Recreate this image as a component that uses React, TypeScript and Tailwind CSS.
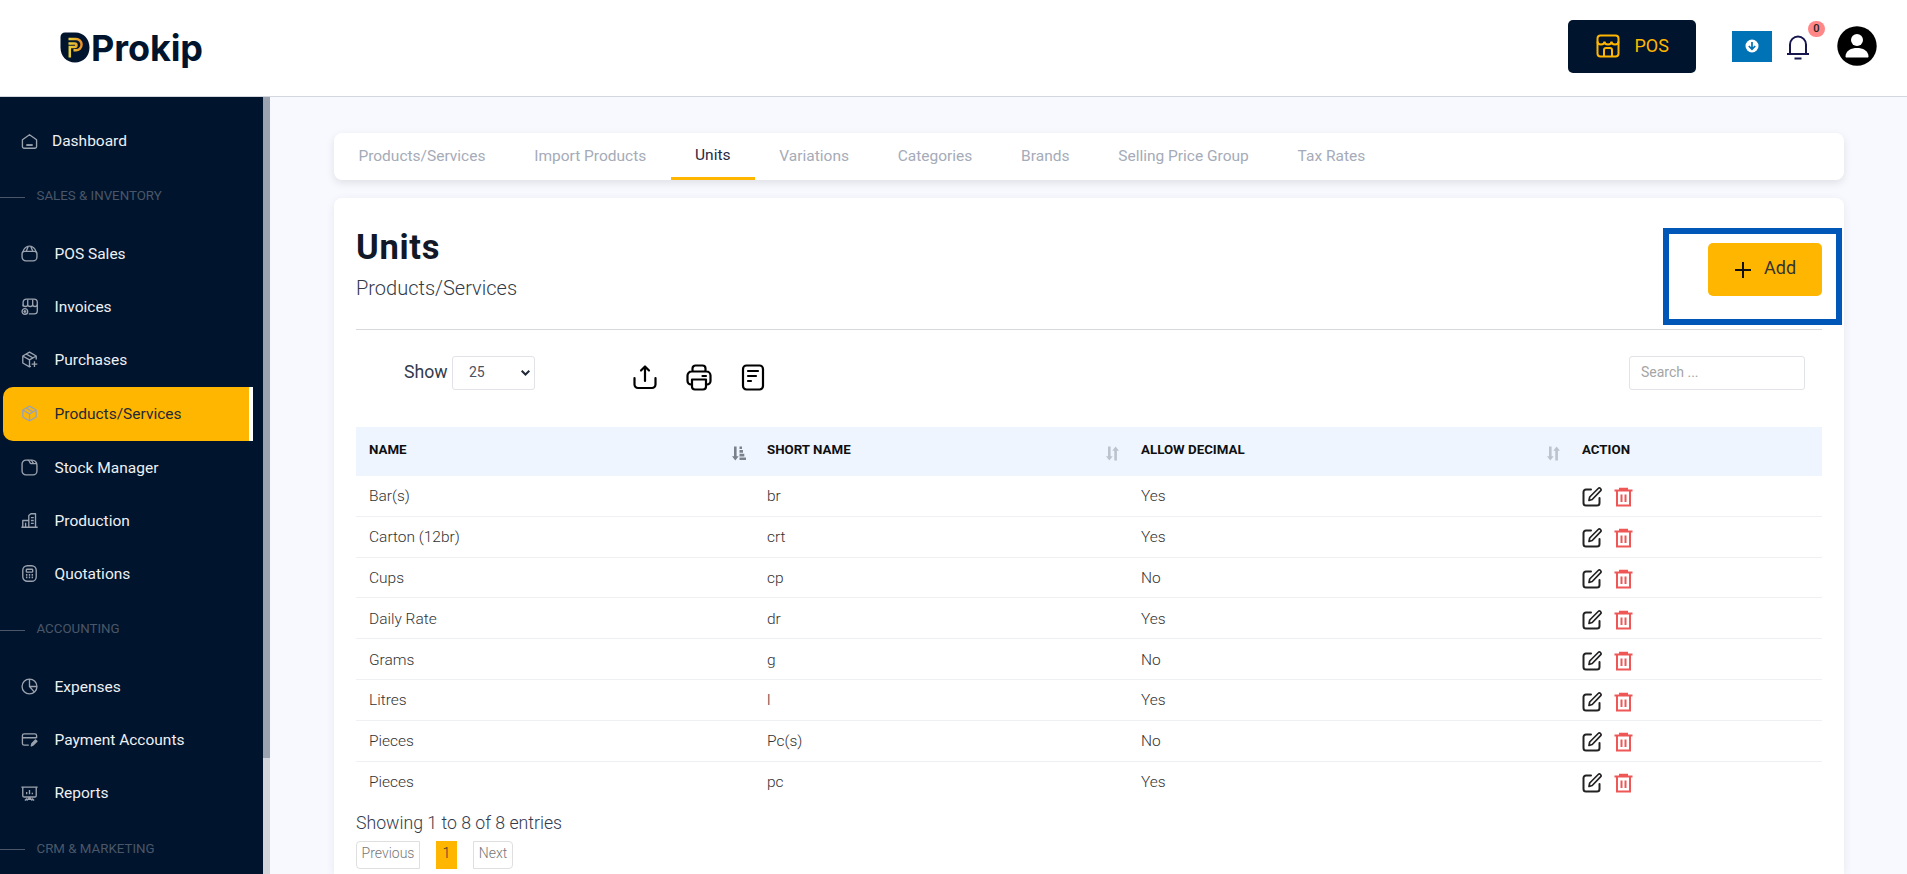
import React from "react";

const iconPaths: Record<string, React.ReactNode> = {
  home: (
    <>
      <path d="M2 9.5 12 2.500l10 7V19a2.500 2.500 0 0 1-2.500 2.500h-15A2.500 2.500 0 0 1 2 19Z" />
      <path d="M7.500 17h9" strokeWidth="2.600" />
    </>
  ),
  bag: (
    <>
      <path d="M1.500 12.500a3.500 3.500 0 0 1 3.500-3.500h14a3.500 3.500 0 0 1 3.500 3.500V17a5.500 5.500 0 0 1-5.500 5.500H7A5.500 5.500 0 0 1 1.500 17Z" />
      <path d="M2.500 10C4 5 8 1.500 12 1.500s8 3.500 9.500 8.500M7.500 8.500l3-7M16.500 8.500l-3-7" />
    </>
  ),
  shop: (
    <>
      <path d="M3 12V6a4.500 4.500 0 0 1 4.500-4.500h11A4.500 4.500 0 0 1 23 6v12a4.500 4.500 0 0 1-4.500 4.500H11" />
      <path d="M3 9c0 4 6.500 4 6.500 0V2M9.500 9c0 4 7 4 7 0V2M16.500 9c0 4 6.500 4 6.500 0" />
      <circle cx="5.500" cy="19" r="4" />
      <path d="M3.500 19h4M5.500 17v4" />
    </>
  ),
  boxPlus: (
    <>
      <path d="M21.500 12V7L12 1.500 2.500 7v10l9.500 5.500 2-1M2.500 7l9.500 5.500L21.500 7M12 12.500v10M7.500 4.500l9 5" />
      <path d="M15 18.500h8M19 14.500v8" />
    </>
  ),
  box: <path d="M12 1.500 21.500 7v10L12 22.500 2.500 17V7ZM2.500 7l9.500 5.500L21.500 7M12 12.500v10M7.500 4.500l9 5" />,
  stock: (
    <>
      <path d="M7 1.500h8.500A7 7 0 0 1 22.500 8.500V17a5.500 5.500 0 0 1-5.500 5.500H7A5.500 5.500 0 0 1 1.500 17V7A5.500 5.500 0 0 1 7 1.500Z" />
      <path d="M9.500 1.500c3 0 2 4 4.500 5h8M14 2c2 0 2 3 4 4.500" />
    </>
  ),
  building: (
    <>
      <path d="M.5 21.500h23M2.500 21V12h8M11 21V5l3-2.500h6.500V21" />
      <path d="M14 8h4M14 12h4M14 16h4M6.500 15v6" />
    </>
  ),
  calculator: (
    <>
      <rect x="2.500" y="1" width="19" height="22" rx="6.500" />
      <rect x="7.500" y="6" width="9" height="4" rx="1" />
      <path d="M7 14h2M11 14h2M15 14h2M7 17.500h2M11 17.500h2M15 17.500h2" strokeWidth="2.500" />
    </>
  ),
  pie: (
    <>
      <circle cx="12" cy="12" r="10.500" />
      <path d="M12 1.500V12l7 8M12 12h10.500" />
    </>
  ),
  card: (
    <>
      <path d="M11 20H4.500A2.500 2.500 0 0 1 2 17.500v-11A2.500 2.500 0 0 1 4.500 4h15A2.500 2.500 0 0 1 22 6.500V10M2 9.500h20" />
      <path d="M14.500 21l1-3.500 5-5 2 2-5 5Z" fill="currentColor" />
    </>
  ),
  chart: (
    <>
      <path d="M.5 3h23M2.500 3v12a2 2 0 0 0 2 2h15a2 2 0 0 0 2-2V3M12 17v4M8 22l4-4 4 4M5.500 22l3-3M18.500 22l-3-3" />
      <path d="M8 13v-3M12 13V7M16 13v-2" />
    </>
  ),
};

const sidebar = [
  { label: "POS Sales", icon: "bag" },
  { label: "Invoices", icon: "shop" },
  { label: "Purchases", icon: "boxPlus" },
  { label: "Products/Services", icon: "box", active: true },
  { label: "Stock Manager", icon: "stock" },
  { label: "Production", icon: "building" },
  { label: "Quotations", icon: "calculator" },
];

const accounting = [
  { label: "Expenses", icon: "pie" },
  { label: "Payment Accounts", icon: "card" },
  { label: "Reports", icon: "chart" },
];

const tabs = [
  "Products/Services",
  "Import Products",
  "Units",
  "Variations",
  "Categories",
  "Brands",
  "Selling Price Group",
  "Tax Rates",
];

const units = [
  { name: "Bar(s)", short: "br", decimal: "Yes" },
  { name: "Carton (12br)", short: "crt", decimal: "Yes" },
  { name: "Cups", short: "cp", decimal: "No" },
  { name: "Daily Rate", short: "dr", decimal: "Yes" },
  { name: "Grams", short: "g", decimal: "No" },
  { name: "Litres", short: "l", decimal: "Yes" },
  { name: "Pieces", short: "Pc(s)", decimal: "No" },
  { name: "Pieces", short: "pc", decimal: "Yes" },
];

function MenuIcon({ name }: { name: string }) {
  return (
    <svg viewBox="0 0 24 24" className="size-[17px] shrink-0 text-[#9ca3af]" fill="none" stroke="currentColor" strokeWidth="1.900" strokeLinejoin="round">
      {iconPaths[name]}
    </svg>
  );
}

function MenuItem({ label, icon, active }: { label: string; icon: string; active?: boolean }) {
  if (active) {
    return (
      <a className="ml-[3px] mr-[10px] flex h-[54px] items-center rounded-l-[10px] border-r-4 border-white bg-[#ffb600] pl-[18px] text-[#1f2937]">
        <MenuIcon name={icon} />
        <span className="ml-[16.500px] pt-0.5">{label}</span>
      </a>
    );
  }
  return (
    <a className="flex h-[53.200px] items-center pl-[21px] text-[#eef0f4]">
      <MenuIcon name={icon} />
      <span className="ml-[16.500px] pt-0.5">{label}</span>
    </a>
  );
}

function MenuHeading({ children }: { children: React.ReactNode }) {
  return (
    <div className="flex h-5 items-center text-[13.300px] text-[#4b5768]">
      <span className="mt-1 h-px w-[25px] bg-[#4b5768]" />
      <span className="ml-[11.500px] pt-0.5">{children}</span>
    </div>
  );
}

function Logo() {
  return (
    <div className="flex items-center text-[#00142d]">
      <svg width="30" height="31" viewBox="0 0 30 31" fill="none" className="-mt-px">
        <defs>
          <linearGradient id="gold" x1="8" y1="0" x2="23" y2="0" gradientUnits="userSpaceOnUse">
            <stop stopColor="#e8d53a" />
            <stop offset="1" stopColor="#e98a24" />
          </linearGradient>
        </defs>
        <path d="M5 .5h10.500C23.500.5 29.500 7 29.500 15.500S23.500 30.500 15 30.500.5 24 .5 15.500V5A4.500 4.500 0 0 1 5 .5Z" fill="#00142d" />
        <path d="M8.500 7H16a5.600 5.600 0 0 1 0 11.200h-2.500M9.800 25.500V15h5a1.700 1.700 0 0 0 0-3.400H8.500" stroke="url(#gold)" strokeWidth="2.500" />
      </svg>
      <span className="ml-px font-[Inter] text-[36px] font-bold leading-[38px] tracking-[-0.1px]">Prokip</span>
    </div>
  );
}

function SortIcon({ active }: { active?: boolean }) {
  if (active) {
    return (
      <svg width="14" height="15" viewBox="0 0 14 15" fill="currentColor" className="mt-[3px] text-[#7b818a]">
        <path d="M2 .5h2.600v9.700h2.100L3.300 14.500 0 10.200h2Z" />
        <path d="M7.500.5h2.500v2.600H7.500ZM7.500 4.100h3.500v2.600H7.500ZM7.500 7.800h4.800v2.600H7.500ZM7.500 11.500H14V14H7.500Z" />
      </svg>
    );
  }
  return (
    <svg width="13" height="15" viewBox="0 0 13 15" fill="currentColor" className="mr-[1.500px] mt-[3px] text-[#bcc3cd]">
      <path d="M2 .5h2.600v9.700h2.100L3.300 14.500 0 10.200h2ZM8.300 14.500V4.800H6.300L9.600.5l3.300 4.300h-2v9.700Z" />
    </svg>
  );
}

function HeaderCell({ label, sort }: { label: string; sort?: "asc" | "none" }) {
  return (
    <div className="flex h-full items-center justify-between pl-[13px] pr-[8px]">
      <span className="-mt-1">{label}</span>
      {sort && <SortIcon active={sort === "asc"} />}
    </div>
  );
}

export default function App() {
  return (
    <div className="flex h-[874px] w-[1907px] flex-col overflow-hidden bg-[#f8f9ff] font-[Roboto,sans-serif] text-[15.500px]">
      <header className="flex h-[97px] shrink-0 items-center justify-between border-b border-[#d5d7de] bg-white pl-[60px] pr-[30px]">
        <Logo />
        <div className="-mt-1 flex items-center">
          <button className="flex h-[53px] w-[128px] items-center rounded-[5px] bg-[#00142d] pl-7 text-lg text-[#ffb600]">
            <svg width="24" height="24" viewBox="0 0 24 24" fill="none" stroke="currentColor" strokeWidth="2">
              <rect x="1.500" y="1.500" width="21" height="21" rx="3" />
              <path d="M1.500 7.500C1.500 11.500 8.500 11.500 8.500 7.500C8.500 11.500 15.500 11.500 15.500 7.500C15.500 11.500 22.500 11.500 22.500 7.500M8 22v-6a2 2 0 0 1 2-2h4a2 2 0 0 1 2 2v6" />
            </svg>
            <span className="ml-[14.500px]">POS</span>
          </button>
          <div className="ml-[36px] flex h-[31px] w-10 items-center justify-center bg-[#0073b7]">
            <svg width="14" height="14" viewBox="0 0 14 14" fill="none">
              <circle cx="7" cy="7" r="6.500" fill="#fff" />
              <path d="M7 3v7M3.800 7 7 10.200 10.200 7" stroke="#0073b7" strokeWidth="1.700" />
            </svg>
          </div>
          <div className="relative ml-[14px]">
            <svg width="24" height="25" viewBox="0 0 24 25" fill="none" stroke="#17164f" strokeWidth="2" className="mt-[3px]">
              <path d="M1 19h22M4 19V9.500a8 8 0 0 1 16 0V19M8.500 23.500h7" />
            </svg>
            <span className="absolute -top-[11px] left-[22px] flex h-4 w-[17px] items-center justify-center rounded-full bg-[#ff8787] text-[11px] font-medium text-[#222]">0</span>
          </div>
          <svg width="40" height="40" viewBox="0 0 40 40" className="ml-[27px]">
            <circle cx="20" cy="20" r="19.700" />
            <circle cx="20" cy="14" r="6" fill="#fff" />
            <path d="M8.500 30.500c0-6 6-8.500 11.500-8.500s11.500 2.500 11.500 8.500c0 .8-.5 1-1 1h-21c-.5 0-1-.2-1-1Z" fill="#fff" />
          </svg>
        </div>
      </header>

      <div className="flex min-h-0 flex-1">
        <aside className="flex w-[270px] shrink-0 overflow-hidden bg-[#00142d]">
          <nav className="w-[263px] shrink-0">
            <a className="mt-[17px] flex h-[54px] items-center pl-[20.500px] text-[#eef0f4]">
              <MenuIcon name="home" />
              <span className="ml-[14.500px] pt-0.5">Dashboard</span>
            </a>
            <div className="pb-8 pt-[17px]">
              <MenuHeading>SALES &amp; INVENTORY</MenuHeading>
            </div>
            <div className="-mt-[10px]">
              {sidebar.map(item => (
                <MenuItem key={item.label} {...item} />
              ))}
            </div>
            <div className="pb-[22px] pt-[18px]">
              <MenuHeading>ACCOUNTING</MenuHeading>
            </div>
            {accounting.map(item => (
              <MenuItem key={item.label} {...item} />
            ))}
            <div className="pt-[18px]">
              <MenuHeading>CRM &amp; MARKETING</MenuHeading>
            </div>
          </nav>
          <div className="w-[7px] bg-[#d3d5da]">
            <div className="h-[661px] bg-[#9ca3b0]" />
          </div>
        </aside>

        <main className="flex min-w-0 flex-1 flex-col pl-16 pr-[63px] pt-9">
          <nav className="flex h-[47px] shrink-0 rounded-lg bg-white shadow-[0_3px_8px_rgba(0,0,0,0.1)]">
            {tabs.map(tab => (
              <a
                key={tab}
                className={
                  tab === "Units"
                    ? "flex items-center border-b-[3px] border-[#ffb600] px-[24.400px] pt-0.5 text-[#1f2a44]"
                    : "flex items-center px-[24.400px] text-[#a5abb8]"
                }
              >
                {tab}
              </a>
            ))}
          </nav>

          <section className="mt-[18px] flex-1 rounded-t-lg bg-white px-[22px] shadow-[0_2px_10px_rgba(0,0,0,0.07)]">
            <div className="flex h-[132px] justify-between border-b border-[#d8d9dc]">
              <div className="pt-7">
                <h1 className="text-[34.500px] font-bold leading-[42px] tracking-[0.7px] text-[#111827]">Units</h1>
                <p className="mt-[8px] text-xl font-light leading-6 text-[#333b47]">Products/Services</p>
              </div>
              <div className="-mr-[20px] mt-[30px] flex h-[97px] w-[179px] items-start justify-end border-[6px] border-[#0057b7] pr-[14px] pt-[9px]">
                <button className="flex h-[53px] w-[114px] items-center rounded-[5px] bg-[#ffb600] pl-[27px] text-lg text-[#333]">
                  <svg width="16" height="16" viewBox="0 0 16 16" stroke="#111" strokeWidth="2" className="mt-px">
                    <path d="M8 0v16M0 8h16" />
                  </svg>
                  <span className="-mt-[3px] ml-[13px]">Add</span>
                </button>
              </div>
            </div>

            <div className="flex h-[97px] items-start pl-12 pr-[17px] pt-[26px]">
              <span className="mt-[2px] w-[43px] text-[17.700px] leading-7 text-[#333b4d]">Show</span>
              <div className="ml-[5px] flex h-[34px] w-[83px] items-center justify-between rounded-[3px] border border-[#e2e3e8] pl-[16px] pr-[4px] text-sm text-[#4b5162]">
                <span className="-mt-0.5">25</span>
                <svg width="9" height="6" viewBox="0 0 9 6" fill="none" stroke="#1f2937" strokeWidth="2">
                  <path d="M.7.8 4.500 4.500 8.300.8" />
                </svg>
              </div>
              <div className="ml-[98px] mt-[8px] flex gap-[29px] text-black">
                <svg width="24" height="26" viewBox="0 0 24 26" fill="none" stroke="currentColor" strokeWidth="2.200" strokeLinecap="round" strokeLinejoin="round">
                  <path d="M1.500 14v6.500a3.500 3.500 0 0 0 3.500 3.500h14a3.500 3.500 0 0 0 3.500-3.500V14M12 17V3M8 6.500l4-4 4 4" />
                </svg>
                <svg width="26" height="27" viewBox="0 0 26 27" fill="none" stroke="currentColor" strokeWidth="2.200" strokeLinecap="round" strokeLinejoin="round">
                  <path d="M6.500 7.500V4.500A3 3 0 0 1 9.500 1.500h7a3 3 0 0 1 3 3v3M6 20.500H5A3.500 3.500 0 0 1 1.500 17v-5.500a4 4 0 0 1 4-4h15a4 4 0 0 1 4 4V17a3.500 3.500 0 0 1-3.500 3.500h-1M16.500 12h3.500" />
                  <path d="M6 15.500h14v7a3 3 0 0 1-3 3H9a3 3 0 0 1-3-3Z" />
                </svg>
                <svg width="24" height="27" viewBox="0 0 24 27" fill="none" stroke="currentColor" strokeWidth="2.200" strokeLinecap="round">
                  <rect x="2" y="1.500" width="20" height="24" rx="3.500" />
                  <path d="M7 7h10M7 12h8M7 17h3" />
                </svg>
              </div>
              <input placeholder="Search ..." className="ml-auto h-[34px] w-[176px] rounded-[3px] border border-[#e2e3e8] pb-0.5 pl-[11px] text-sm placeholder:text-[#a5a5a5]" />
            </div>

            <div className="grid h-[49px] grid-cols-[398px_374px_441px_1fr] bg-[#eff5ff] text-[13.300px] font-bold text-[#0f0f0f]">
              <HeaderCell label="NAME" sort="asc" />
              <HeaderCell label="SHORT NAME" sort="none" />
              <HeaderCell label="ALLOW DECIMAL" sort="none" />
              <HeaderCell label="ACTION" />
            </div>
            {units.map((unit, i) => (
              <div
                key={i}
                className={`grid h-[40.830px] grid-cols-[398px_374px_441px_1fr] items-center border-b pt-0.5 font-light text-[#333] ${i === units.length - 1 ? "border-transparent" : "border-[#eef0f3]"}`}
              >
                <span className="pl-[13px]">{unit.name}</span>
                <span className="pl-[13px]">{unit.short}</span>
                <span className="pl-[13px]">{unit.decimal}</span>
                <span className="flex gap-[12px] pl-[13px] pt-px">
                  <svg width="20" height="20" viewBox="0 0 20 20" fill="none" stroke="#222" strokeWidth="2" strokeLinecap="round" strokeLinejoin="round">
                    <path d="M9 2.500H4A2.500 2.500 0 0 0 1.500 5v11A2.500 2.500 0 0 0 4 18.500h11a2.500 2.500 0 0 0 2.500-2.500v-5" />
                    <path d="M7 13.500l.7-3.500 8.500-8.500a1.500 1.500 0 0 1 2.300 2.300L10.200 12.500Z" strokeWidth="1.700" />
                  </svg>
                  <svg width="19" height="20" viewBox="0 0 19 20" fill="none" stroke="#ef5656" strokeWidth="2.200">
                    <path d="M.5 3.500h18M5 1.800h9" />
                    <path d="M3 4v14.500h13V4M7.500 7.500V15M11.500 7.500V15" strokeWidth="2" />
                  </svg>
                </span>
              </div>
            ))}

            <p className="mt-[8px] text-[17.700px] font-light leading-6 text-[#333b4d]">Showing 1 to 8 of 8 entries</p>
            <div className="mt-[6px] flex gap-4 text-sm font-light text-[#777]">
              <span className="flex h-7 w-[64px] items-center justify-center rounded-l-[4px] border border-[#dfdfdf] pb-[3px]">Previous</span>
              <span className="flex h-7 w-[21px] items-center justify-center bg-[#ffb600] pb-[3px] text-[#333]">1</span>
              <span className="flex h-7 w-[40px] items-center justify-center rounded-r-[4px] border border-[#dfdfdf] pb-[3px]">Next</span>
            </div>
          </section>
        </main>
      </div>
    </div>
  );
}
